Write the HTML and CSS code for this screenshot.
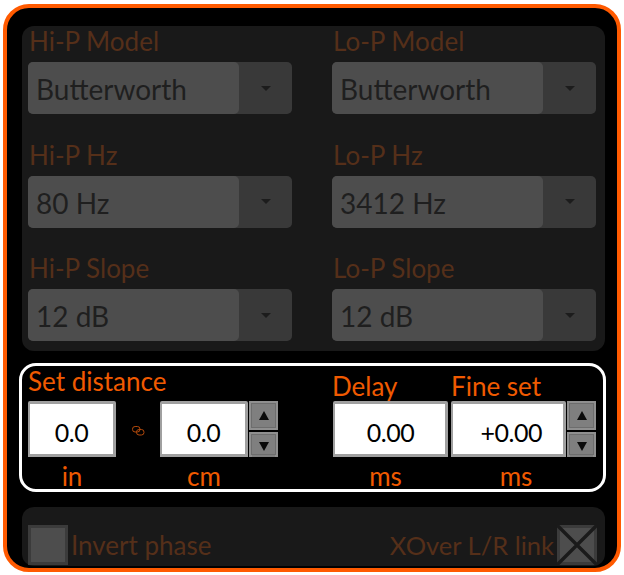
FILE: index.html
```html
<!DOCTYPE html>
<html lang="en">
<head>
<meta charset="utf-8">
<title>Crossover</title>
<link rel="stylesheet" href="styles.css">
</head>
<body>
<main class="frame">
  <section class="filters">
    <div class="field"><div class="dim-label">Hi-P Model</div><div class="combo"><div class="combo-value">Butterworth</div><div class="combo-btn"><span class="caret"></span></div></div></div>
    <div class="field"><div class="dim-label">Lo-P Model</div><div class="combo"><div class="combo-value">Butterworth</div><div class="combo-btn"><span class="caret"></span></div></div></div>
    <div class="field"><div class="dim-label">Hi-P Hz</div><div class="combo"><div class="combo-value">80 Hz</div><div class="combo-btn"><span class="caret"></span></div></div></div>
    <div class="field"><div class="dim-label">Lo-P Hz</div><div class="combo"><div class="combo-value">3412 Hz</div><div class="combo-btn"><span class="caret"></span></div></div></div>
    <div class="field"><div class="dim-label">Hi-P Slope</div><div class="combo"><div class="combo-value">12 dB</div><div class="combo-btn"><span class="caret"></span></div></div></div>
    <div class="field"><div class="dim-label">Lo-P Slope</div><div class="combo"><div class="combo-value">12 dB</div><div class="combo-btn"><span class="caret"></span></div></div></div>
  </section>

  <section class="distance">
    <div class="group group-left">
      <div class="title title-high">Set distance</div>
      <div class="inputs">
        <div class="unit-col col-in"><div class="num">0.0</div><div class="unit">in</div></div>
        <div class="link">
          <svg width="13" height="10" viewBox="0 0 13 10" fill="none" stroke="#b34a0c" stroke-width="1"><rect x="0.5" y="0.5" width="7.5" height="5.5" rx="2.6"/><rect x="4.5" y="3.5" width="7.5" height="5.5" rx="2.6"/></svg>
        </div>
        <div class="unit-col col-cm"><div class="num">0.0</div><div class="unit">cm</div></div>
        <div class="spin"><div class="spin-btn spin-up"><span class="tri-up"></span></div><div class="spin-btn spin-down"><span class="tri-down"></span></div></div>
      </div>
    </div>
    <div class="group group-right">
      <div class="titles"><div class="title title-delay">Delay</div><div class="title">Fine set</div></div>
      <div class="inputs">
        <div class="unit-col col-ms"><div class="num">0.00</div><div class="unit">ms</div></div>
        <div class="unit-col col-fine"><div class="num">+0.00</div><div class="unit">ms</div></div>
        <div class="spin"><div class="spin-btn spin-up"><span class="tri-up"></span></div><div class="spin-btn spin-down"><span class="tri-down"></span></div></div>
      </div>
    </div>
  </section>

  <section class="options">
    <div class="option"><div class="check"></div><div class="dim-label">Invert phase</div></div>
    <div class="option"><div class="dim-label dim-label-tight">XOver L/R link</div>
      <div class="check">
        <svg class="check-x" width="40" height="40" viewBox="0 0 40 40" stroke="#1a1a1a" stroke-width="3.4"><path d="M0 0L40 40M40 0L0 40"/></svg>
      </div>
    </div>
  </section>
</main>
</body>
</html>
```

FILE: styles.css
```css
* { box-sizing: border-box; }
html, body { margin: 0; padding: 0; background: #fff; }
body { width: 624px; height: 575px; overflow: hidden; font-family: Lato, "Open Sans", "Liberation Sans", sans-serif; padding: 4px 3px 3px; }

.frame {
  width: 618px;
  height: 568px;
  background: #000;
  border: 4px solid #ff5a00;
  border-radius: 26px;
  padding: 18px 15px 0 15px;
  display: flex;
  flex-direction: column;
}

.filters {
  width: 583px;
  height: 325px;
  flex: none;
  background: #191919;
  border-radius: 12px;
  padding: 0 9px 0 6px;
  display: grid;
  grid-template-columns: 264px 264px;
  column-gap: 40px;
  grid-auto-rows: 113.5px;
  align-content: start;
}

.field { display: flex; flex-direction: column; }

.dim-label {
  color: #552f19;
  font-size: 26px;
  line-height: 30px;
  white-space: nowrap;
}
.dim-label-tight { font-size: 25.5px; }
.field .dim-label { height: 36px; padding-left: 1px; flex: none; }

.combo {
  height: 52px;
  flex: none;
  display: flex;
  background: #393939;
  border-radius: 5px;
}
.combo-value {
  width: 211px;
  background: #4d4d4d;
  border-radius: 5px;
  color: #1f1f1f;
  font-size: 28px;
  line-height: 54px;
  padding-left: 8px;
}
.combo-btn { flex: 1; display: flex; align-items: center; justify-content: center; }
.caret {
  width: 0; height: 0;
  border-left: 5px solid transparent;
  border-right: 5px solid transparent;
  border-top: 5px solid #1c1c1c;
}

.distance {
  margin: 12px 0 0 -3px;
  width: 587px;
  height: 129px;
  flex: none;
  border: 3px solid #fff;
  border-radius: 17px;
  display: flex;
  padding: 0 0 0 6px;
}

.group { display: flex; flex-direction: column; }
.group-left { width: 305px; }

.title {
  color: #f05a00;
  font-size: 26px;
  line-height: 30px;
  white-space: nowrap;
}
.title-high { height: 35px; flex: none; }
.titles { display: flex; height: 35px; flex: none; padding-top: 5px; margin-left: -1px; }
.title-delay { width: 119px; }

.inputs { display: flex; align-items: flex-start; }

.unit-col { display: flex; flex-direction: column; align-items: stretch; }
.col-in, .col-cm { width: 88px; }
.col-ms, .col-fine { width: 115px; }
.col-ms { margin-right: 3px; }

.num {
  height: 56px;
  flex: none;
  background: #fff;
  border: 2px solid #a0a0a0;
  border-top-width: 3px;
  border-right-width: 3px;
  border-bottom-width: 3px;
  border-radius: 2px 2px 0 0;
  color: #000;
  font-size: 25px;
  letter-spacing: -0.5px;
  line-height: 56px;
  text-align: center;
}
.col-fine .num { text-align: right; padding-right: 21px; }
.col-ms .num { padding-left: 1px; }

.unit {
  color: #f05a00;
  font-size: 26px;
  line-height: 25px;
  text-align: center;
  margin-top: 7px;
}
.col-ms .unit { padding-right: 10px; }
.col-fine .unit { padding-left: 15px; }

.link { width: 44px; height: 60px; display: flex; align-items: center; justify-content: center; }

.spin { width: 29px; margin-left: 1px; display: flex; flex-direction: column; gap: 2px; }
.spin-btn {
  background: #7f7f7f;
  border: 3px solid #8f8f8f;
  display: flex;
  align-items: center;
  justify-content: center;
  outline: 1px solid #6d6d6d;
  outline-offset: -3px;
}
.spin-up { height: 29px; }
.spin-down { height: 25px; border-bottom: 0; }
.tri-up { width: 0; height: 0; border-left: 5px solid transparent; border-right: 5px solid transparent; border-bottom: 9px solid #0a0a0a; }
.tri-down { width: 0; height: 0; border-left: 5px solid transparent; border-right: 5px solid transparent; border-top: 9px solid #0a0a0a; }

.options {
  margin-top: 15px;
  width: 583px;
  height: 59px;
  flex: none;
  background: #191919;
  border-radius: 12px;
  padding: 18px 8px 0 6px;
  display: flex;
  justify-content: space-between;
  align-items: flex-start;
}
.option { display: flex; align-items: center; height: 40px; gap: 3px; }
.check {
  position: relative;
  width: 40px;
  height: 40px;
  background: #4d4d4d;
  border: 3px solid #3b3b3b;
}
.check-x { position: absolute; left: -3px; top: -3px; }
```
